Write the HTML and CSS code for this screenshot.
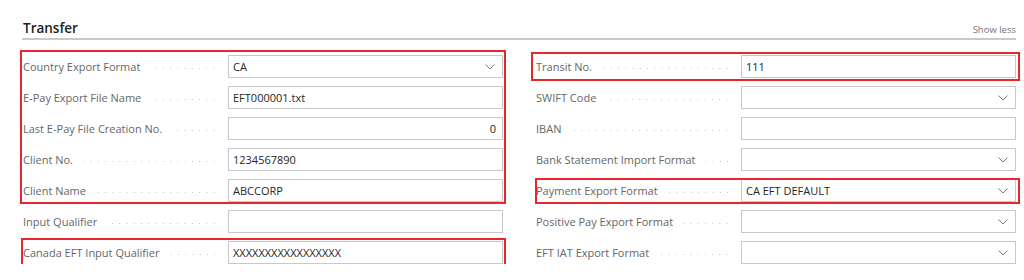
FILE: index.html
```html
<!DOCTYPE html>
<html lang="en">
	<head>
		<meta charset="utf-8">
		<title>Transfer</title>
		<link rel="stylesheet" href="styles.css">
	</head>
	<body>
		<section class="panel">
			<header class="panelHead">
				<h2 class="title">Transfer</h2>
				<span class="toggle">Show less</span>
			</header>

			<div class="columns">
				<!-- left column -->
				<div class="col">
					<div class="mark markGroup">
						<div class="field">
							<label><span>Country Export Format</span><i class="dots"></i></label>
							<div class="box select">CA<svg class="chev" width="10" height="6" viewBox="0 0 10 6"><polyline points="0.5,0.5 5,5 9.5,0.5"/></svg></div>
						</div>
						<div class="field">
							<label><span>E-Pay Export File Name</span><i class="dots"></i></label>
							<div class="box">EFT000001.txt</div>
						</div>
						<div class="field">
							<label><span>Last E-Pay File Creation No.</span><i class="dots"></i></label>
							<div class="box num">0</div>
						</div>
						<div class="field">
							<label><span>Client No.</span><i class="dots"></i></label>
							<div class="box">1234567890</div>
						</div>
						<div class="field">
							<label><span>Client Name</span><i class="dots"></i></label>
							<div class="box">ABCCORP</div>
						</div>
					</div>
					<div class="field">
						<label><span>Input Qualifier</span><i class="dots"></i></label>
						<div class="box"></div>
					</div>
					<div class="field mark markCanada">
						<label><span>Canada EFT Input Qualifier</span><i class="dots"></i></label>
						<div class="box">XXXXXXXXXXXXXXXXX</div>
					</div>
				</div>

				<!-- right column -->
				<div class="col">
					<div class="field mark markTransit">
						<label><span>Transit No.</span><i class="dots"></i></label>
						<div class="box">111</div>
					</div>
					<div class="field">
						<label><span>SWIFT Code</span><i class="dots"></i></label>
						<div class="box select"><svg class="chev" width="10" height="6" viewBox="0 0 10 6"><polyline points="0.5,0.5 5,5 9.5,0.5"/></svg></div>
					</div>
					<div class="field">
						<label><span>IBAN</span><i class="dots"></i></label>
						<div class="box"></div>
					</div>
					<div class="field">
						<label><span>Bank Statement Import Format</span><i class="dots"></i></label>
						<div class="box select"><svg class="chev" width="10" height="6" viewBox="0 0 10 6"><polyline points="0.5,0.5 5,5 9.5,0.5"/></svg></div>
					</div>
					<div class="field mark markPayment">
						<label><span>Payment Export Format</span><i class="dots"></i></label>
						<div class="box select">CA EFT DEFAULT<svg class="chev" width="10" height="6" viewBox="0 0 10 6"><polyline points="0.5,0.5 5,5 9.5,0.5"/></svg></div>
					</div>
					<div class="field">
						<label><span>Positive Pay Export Format</span><i class="dots"></i></label>
						<div class="box select"><svg class="chev" width="10" height="6" viewBox="0 0 10 6"><polyline points="0.5,0.5 5,5 9.5,0.5"/></svg></div>
					</div>
					<div class="field">
						<label><span>EFT IAT Export Format</span><i class="dots"></i></label>
						<div class="box select"><svg class="chev" width="10" height="6" viewBox="0 0 10 6"><polyline points="0.5,0.5 5,5 9.5,0.5"/></svg></div>
					</div>
				</div>
			</div>
		</section>
	</body>
</html>
```

FILE: styles.css
```css
body {
	margin: 0;
	background: #ffffff;
	font-family: "Open Sans", "Liberation Sans", sans-serif;
	color: #666666;
}

.panel {
	width: 994px;
	margin-left: 22px;
}

.panelHead {
	display: flex;
	justify-content: space-between;
	align-items: baseline;
	padding: 20px 0 2px 1px;
	border-bottom: 2px solid #c9c9c9;
}

.title {
	margin: 0;
	font-size: 13.5px;
	line-height: 16px;
	font-weight: 600;
	color: #212121;
}

.toggle {
	font-size: 9.5px;
	color: #767676;
}

.columns {
	display: grid;
	grid-template-columns: 481px 481px;
	column-gap: 32px;
	margin-top: 15px;
}

.col {
	display: flex;
	flex-direction: column;
	gap: 8px;
}

.markGroup {
	display: flex;
	flex-direction: column;
	gap: 8px;
}

.field {
	display: grid;
	grid-template-columns: 206px 1fr;
	height: 23px;
}

.field label {
	display: flex;
	padding-left: 1px;
	font-size: 11px;
	line-height: 23px;
	white-space: nowrap;
}

.dots {
	flex: 1;
	align-self: flex-end;
	height: 1px;
	margin: 0 7px 9px 9px;
	background: linear-gradient(to right, #c2c2c2 1px, transparent 1px) right bottom / 7.25px 1px repeat-x;
}

.box {
	position: relative;
	box-sizing: border-box;
	height: 23px;
	padding: 0 6px 0 4px;
	border: 1px solid #c6c8cc;
	font-size: 11px;
	line-height: 21px;
	color: #262626;
}

.num {
	text-align: right;
}

.chev {
	position: absolute;
	right: 7px;
	top: 8px;
	fill: none;
	stroke: #7a7a7a;
	stroke-width: 1;
}

/* red annotation frames drawn over the form */
.mark {
	position: relative;
}

.mark::after {
	content: "";
	position: absolute;
	border: 2px solid #e8272c;
	pointer-events: none;
}

.markGroup::after {
	top: -5px;
	left: -2px;
	right: -3px;
	bottom: -2px;
}

.markCanada::after {
	top: -3px;
	left: -1px;
	right: -3px;
	bottom: -2px;
}

.markTransit::after {
	top: -3px;
	left: -4px;
	right: -4px;
	bottom: -3px;
}

.markPayment::after {
	top: -1px;
	left: 0;
	right: -4px;
	bottom: -2px;
}
```
